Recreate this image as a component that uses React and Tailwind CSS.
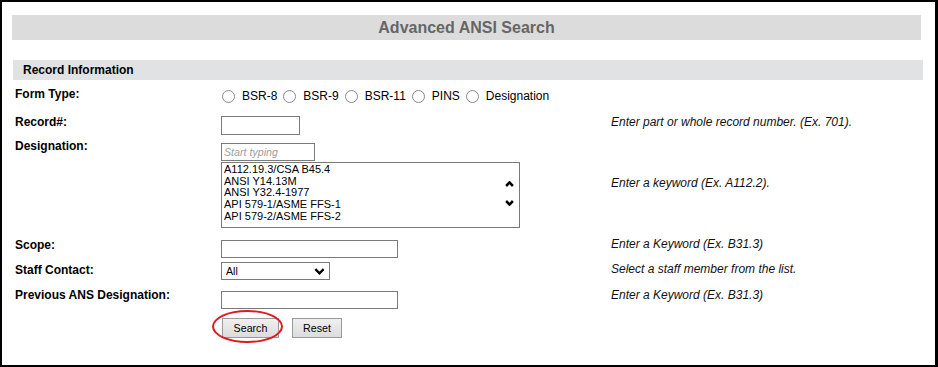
import React from 'react';

const label = "text-[12px] leading-[14px] font-bold text-black pl-[3px]";
const help = "text-[12px] leading-[14px] italic text-[#111]";
const ctl = "text-[10.67px] font-['Liberation_Sans',Arial,sans-serif]";

const Radio = ({ text }) => (
  <span className="inline-flex items-center">
    <span className="w-[13px] h-[13px] rounded-full border border-[#8a8a8a] bg-white mr-[7px]" />
    <span className="mr-[6px]">{text}</span>
  </span>
);

const Chevron = ({ up, w = 8, h = 5, sw = 2 }) => (
  <svg width={w} height={h} viewBox="0 0 8 5" preserveAspectRatio="none">
    <path d={up ? 'M1 4.2 L4 1.2 L7 4.2' : 'M1 0.8 L4 3.8 L7 0.8'} fill="none" stroke="#000" strokeWidth={sw} />
  </svg>
);

const designations = [
  'A112.19.3/CSA B45.4',
  'ANSI Y14.13M',
  'ANSI Y32.4-1977',
  'API 579-1/ASME FFS-1',
  'API 579-2/ASME FFS-2',
];

export default function App() {
  return (
    <div className="w-[938px] h-[367px] bg-white border-l-2 border-t-2 border-r-[3px] border-b-2 border-black font-['Liberation_Sans',Arial,sans-serif] text-black overflow-hidden">
      <div className="pt-[13px] pl-[10px]">
        {/* title */}
        <div className="w-[909px] h-[25px] bg-[#dcdcdc] flex items-center justify-center text-[16px] font-bold text-[#666]">
          Advanced ANSI Search
        </div>

        {/* section header */}
        <div className="mt-[20px] ml-[1px] w-[910px] h-[20px] bg-[#e1e2e4] flex items-center pl-[10px] text-[12px] font-bold">
          Record Information
        </div>

        {/* Form Type */}
        <div className="grid grid-cols-[209px_390px_1fr] h-[32px] items-start">
          <div className={`${label} mt-[7px]`}>Form Type:</div>
          <div className="mt-[9px] flex items-center text-[12px] leading-[14px] pl-[1px]">
            <Radio text="BSR-8" />
            <Radio text="BSR-9" />
            <Radio text="BSR-11" />
            <Radio text="PINS" />
            <Radio text="Designation" />
          </div>
          <div />
        </div>

        {/* Record# */}
        <div className="grid grid-cols-[209px_390px_1fr] h-[26px] items-start">
          <div className={`${label} mt-[3px]`}>Record#:</div>
          <div>
            <input className={`${ctl} w-[79px] h-[19px] border border-[#7a7a7a] bg-white outline-none`} />
          </div>
          <div className={`${help} mt-[3px]`}>Enter part or whole record number. (Ex. 701).</div>
        </div>

        {/* Designation */}
        <div className="grid grid-cols-[209px_390px_1fr] h-[23px] items-start">
          <div className={`${label} mt-[1px]`}>Designation:</div>
          <div className="mt-[1px]">
            <input
              placeholder="Start typing"
              className={`${ctl} w-[94px] h-[18px] border border-[#7a7a7a] bg-white outline-none px-[2px] placeholder:italic placeholder:text-[#a0a0a0]`}
            />
          </div>
          <div />
        </div>

        <div className="grid grid-cols-[209px_390px_1fr] h-[72px] items-start">
          <div />
          <div className="mt-[1px]">
            <div className="text-[11px] font-['Liberation_Sans',Arial,sans-serif] w-[299px] h-[66px] border border-[#7a7a7a] bg-white flex pl-[2px] pt-[1px]">
              <div className="flex-1 leading-[11.7px]">
                {designations.map((d) => (
                  <div key={d}>{d}</div>
                ))}
              </div>
              <div className="w-[16px] flex flex-col items-center pt-[17px] gap-[13px] pr-[4px]">
                <Chevron up w={9} h={6} sw={2.2} />
                <Chevron w={9} h={6} sw={2.2} />
              </div>
            </div>
          </div>
          <div className={`${help} mt-[15px]`}>Enter a keyword (Ex. A112.2).</div>
        </div>

        {/* Scope */}
        <div className="grid grid-cols-[209px_390px_1fr] h-[26px] items-start">
          <div className={`${label} mt-[5px]`}>Scope:</div>
          <div className="mt-[3px]">
            <input className={`${ctl} w-[177px] h-[18px] border border-[#7a7a7a] bg-white outline-none`} />
          </div>
          <div className={`${help} mt-[4px]`}>Enter a Keyword (Ex. B31.3)</div>
        </div>

        {/* Staff Contact */}
        <div className="grid grid-cols-[209px_390px_1fr] h-[25px] items-start">
          <div className={`${label} mt-[4px]`}>Staff Contact:</div>
          <div className="mt-[3px]">
            <div className={`${ctl} w-[109px] h-[18px] border border-[#7a7a7a] bg-white flex items-center justify-between pl-[4px] pr-[4px]`}>
              <span>All</span>
              <Chevron w={11} h={7} sw={1.7} />
            </div>
          </div>
          <div className={`${help} mt-[3px]`}>Select a staff member from the list.</div>
        </div>

        {/* Previous ANS */}
        <div className="grid grid-cols-[209px_390px_1fr] h-[30px] items-start">
          <div className={`${label} mt-[4px] pl-[2px]`}>Previous ANS Designation:</div>
          <div className="mt-[3px]">
            <input className={`${ctl} w-[177px] h-[18px] border border-[#7a7a7a] bg-white outline-none`} />
          </div>
          <div className={`${help} mt-[4px]`}>Enter a Keyword (Ex. B31.3)</div>
        </div>

        {/* buttons */}
        <div className="grid grid-cols-[209px_390px_1fr]">
          <div />
          <div className="relative mt-[4px] flex gap-[13px] pl-[1px]">
            <button className={`${ctl} w-[57px] h-[20px] border border-[#9a9a9a] bg-gradient-to-b from-[#f0f0f0] to-[#dcdcdc] text-black`}>
              Search
            </button>
            <button className={`${ctl} w-[50px] h-[20px] border border-[#9a9a9a] bg-gradient-to-b from-[#f0f0f0] to-[#dcdcdc] text-black`}>
              Reset
            </button>
            <div className="absolute left-[-9px] top-[-8px] w-[71px] h-[33px] rounded-[50%] border-2 border-[#e0191f] pointer-events-none" />
          </div>
        </div>
      </div>
    </div>
  );
}
